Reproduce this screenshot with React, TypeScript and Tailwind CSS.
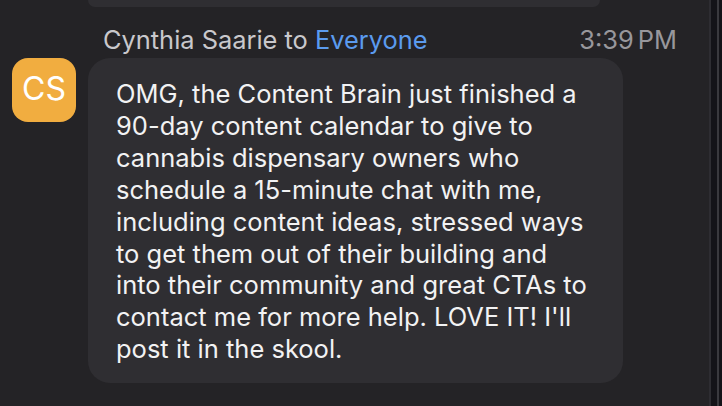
import React from 'react';

const message =
  "OMG, the Content Brain just finished a 90-day content calendar to give to cannabis dispensary owners who schedule a 15-minute chat with me, including content ideas, stressed ways to get them out of their building and into their community and great CTAs to contact me for more help. LOVE IT! I'll post it in the skool.";

const lines = [
  'OMG, the Content Brain just finished a',
  '90-day content calendar to give to',
  'cannabis dispensary owners who',
  'schedule a 15-minute chat with me,',
  'including content ideas, stressed ways',
  'to get them out of their building and',
  'into their community and great CTAs to',
  "contact me for more help. LOVE IT! I'll",
  'post it in the skool.',
];

const ChatMessage = () => {
  return (
    <div className="flex flex-col">
      {/* tail of the previous bubble */}
      <div className="ml-[88px] h-[7px] w-[512px] rounded-b-[20px] bg-[#2f2e32]" />

      <div className="mt-[18px] flex items-baseline justify-between pl-[103px] pr-[32px] text-[25.4px] leading-[30px]">
        <span className="text-[#c9c8cc]">
          Cynthia Saarie to <span className="text-[#5b9bef]">Everyone</span>
        </span>
        <span className="text-[#98979c] [word-spacing:-3px]">3:39 PM</span>
      </div>

      <div className="mt-[3px] flex items-start gap-[12px] pl-[12px]">
        <div className="flex h-[64px] w-[64px] shrink-0 items-center justify-center rounded-[16px] bg-[#f1ad40] pb-[2px] text-[32px] text-white">
          CS
        </div>
        <div
          className="w-[535px] rounded-[22px] bg-[#2f2e32] pb-[18px] pl-[28px] pr-[20px] pt-[20px] text-[25.5px] leading-[31.9px] text-[#f2f2f3]"
          title={message}
        >
          {lines.map((l, i) => (
            <div key={i} className="whitespace-nowrap">
              {l}
            </div>
          ))}
        </div>
      </div>
    </div>
  );
};

export default function App() {
  return (
    <div
      className="flex h-[406px] w-[722px] overflow-hidden bg-[#242326]"
      style={{ fontFamily: 'Inter, "Liberation Sans", sans-serif' }}
    >
      <div className="flex-1">
        <ChatMessage />
      </div>
      <div className="flex w-[13px] shrink-0">
        <div className="w-[2px] bg-[#2e2d32]" />
        <div className="w-[6px] bg-[#141318]" />
        <div className="w-[2px] bg-[#3a393e]" />
        <div className="flex-1 bg-[#141318]" />
      </div>
    </div>
  );
}
